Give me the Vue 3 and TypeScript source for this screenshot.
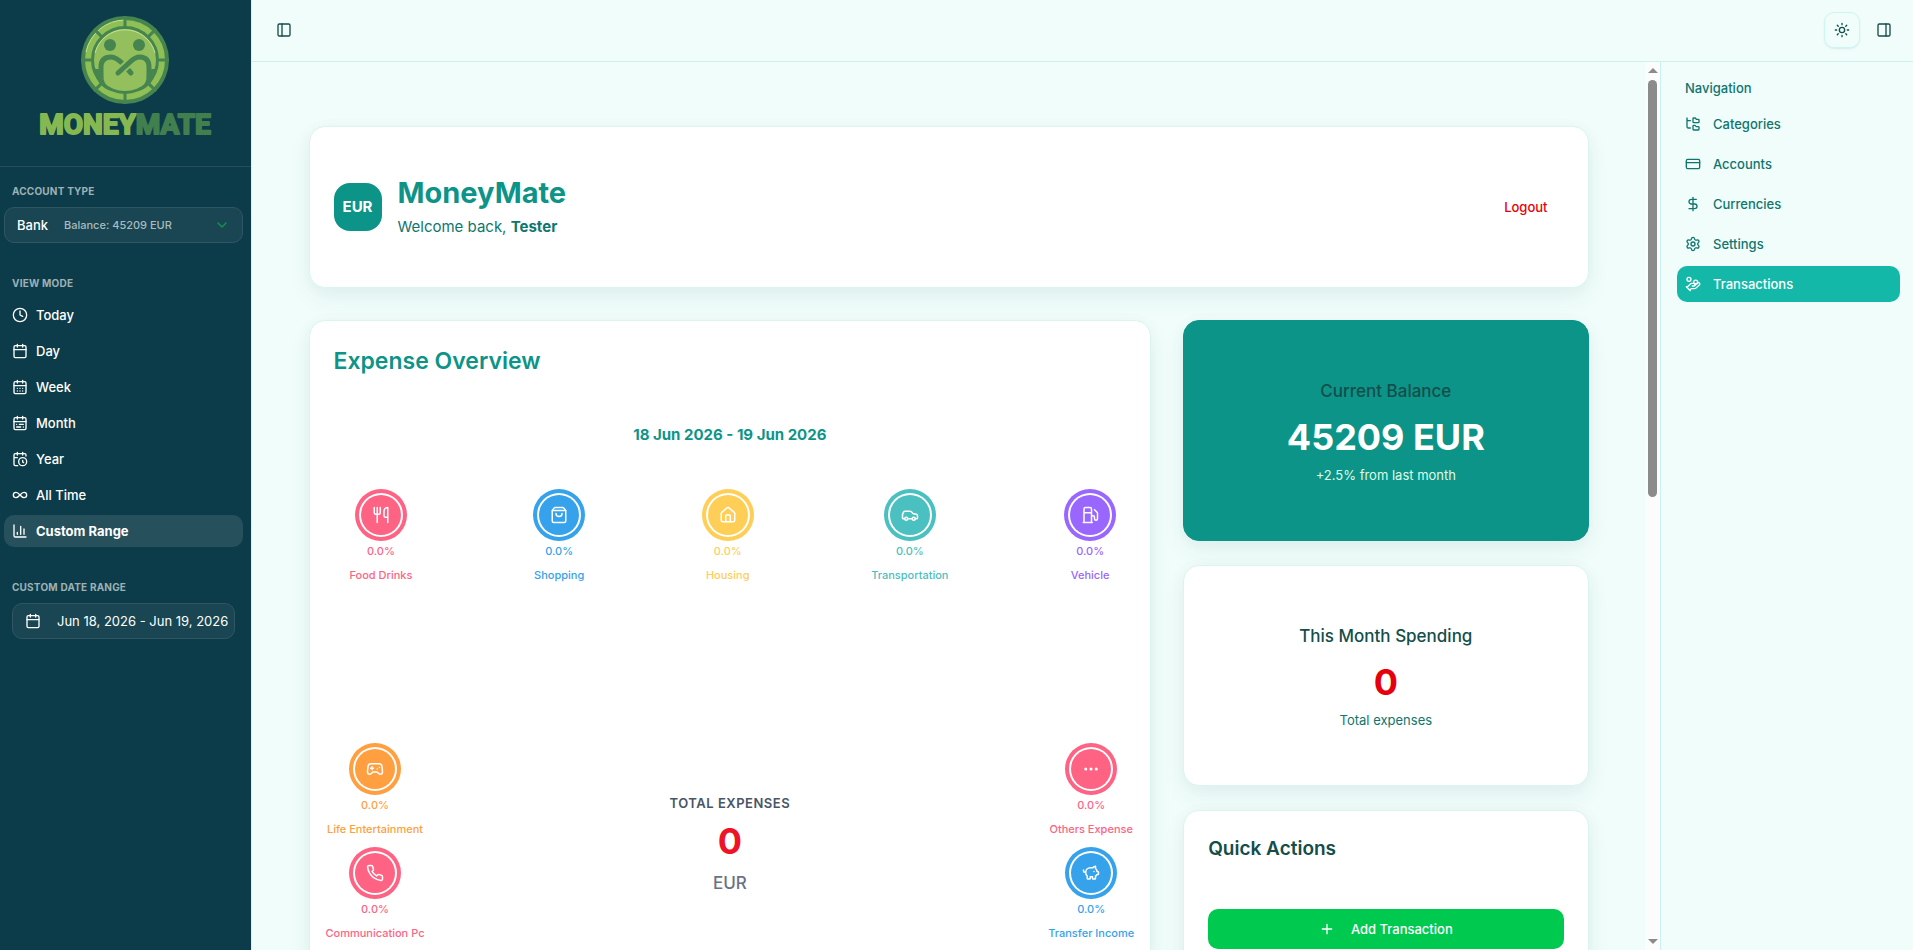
<script setup lang="ts">
import { ref } from 'vue'

const icons: Record<string, string> = {
  clock: '<circle cx="12" cy="12" r="10"/><path d="M12 6v6l4 2"/>',
  calendar: '<path d="M8 2v4M16 2v4M3 10h18"/><rect width="18" height="18" x="3" y="4" rx="2"/>',
  week: '<path d="M8 2v4M16 2v4M3 10h18M8 14h.01M12 14h.01M16 14h.01M8 18h.01M12 18h.01M16 18h.01"/><rect width="18" height="18" x="3" y="4" rx="2"/>',
  month: '<rect width="18" height="18" x="3" y="4" rx="2"/><path d="M16 2v4M3 10h18M8 2v4M17 14h-6M13 18H7M7 14h.01M17 18h.01"/>',
  year: '<path d="M21 7.5V6a2 2 0 0 0-2-2H5a2 2 0 0 0-2 2v14a2 2 0 0 0 2 2h3.5M16 2v4M8 2v4M3 10h5M17.5 17.5 16 16.3V14"/><circle cx="16" cy="16" r="6"/>',
  infinity: '<path d="M6 16c5 0 7-8 12-8a4 4 0 0 1 0 8c-5 0-7-8-12-8a4 4 0 1 0 0 8"/>',
  chart: '<path d="M3 3v16a2 2 0 0 0 2 2h16M18 17V9M13 17V5M8 17v-3"/>',
  chevron: '<path d="m6 9 6 6 6-6"/>',
  panelLeft: '<rect width="18" height="18" x="3" y="3" rx="2"/><path d="M9 3v18"/>',
  panelRight: '<rect width="18" height="18" x="3" y="3" rx="2"/><path d="M15 3v18"/>',
  sun: '<circle cx="12" cy="12" r="4"/><path d="M12 2v2M12 20v2M4.93 4.93l1.41 1.41M17.66 17.66l1.41 1.41M2 12h2M20 12h2M6.34 17.66l-1.41 1.41M19.07 4.93l-1.41 1.41"/>',
  tree: '<path d="M20 10a1 1 0 0 0 1-1V6a1 1 0 0 0-1-1h-2.5a1 1 0 0 1-.8-.4l-.9-1.2A1 1 0 0 0 15 3h-2a1 1 0 0 0-1 1v5a1 1 0 0 0 1 1ZM20 21a1 1 0 0 0 1-1v-3a1 1 0 0 0-1-1h-2.9a1 1 0 0 1-.88-.55l-.42-.85a1 1 0 0 0-.92-.6H13a1 1 0 0 0-1 1v5a1 1 0 0 0 1 1ZM3 5a2 2 0 0 0 2 2h3M3 3v13a2 2 0 0 0 2 2h3"/>',
  card: '<rect width="20" height="14" x="2" y="5" rx="2"/><path d="M2 10h20"/>',
  dollar: '<path d="M12 2v20M17 5H9.5a3.5 3.5 0 0 0 0 7h5a3.5 3.5 0 0 1 0 7H6"/>',
  gear: '<path d="M9.671 4.136a2.34 2.34 0 0 1 4.659 0 2.34 2.34 0 0 0 3.319 1.915 2.34 2.34 0 0 1 2.33 4.033 2.34 2.34 0 0 0 0 3.831 2.34 2.34 0 0 1-2.33 4.033 2.34 2.34 0 0 0-3.319 1.915 2.34 2.34 0 0 1-4.659 0 2.34 2.34 0 0 0-3.32-1.915 2.34 2.34 0 0 1-2.33-4.033 2.34 2.34 0 0 0 0-3.831A2.34 2.34 0 0 1 6.35 6.051a2.34 2.34 0 0 0 3.319-1.915"/><circle cx="12" cy="12" r="3"/>',
  coins: '<path d="M11 15h2a2 2 0 1 0 0-4h-3c-.6 0-1.1.2-1.4.6L3 17"/><path d="m7 21 1.6-1.4c.3-.4.8-.6 1.4-.6h4c1.1 0 2.1-.4 2.8-1.2l4.6-4.4a2 2 0 0 0-2.75-2.91l-4.2 3.9M2 16l6 6"/><circle cx="16" cy="9" r="2.9"/><circle cx="6" cy="5" r="3"/>',
  food: '<path d="M3 2v7c0 1.1.9 2 2 2h4a2 2 0 0 0 2-2V2M7 2v20M21 15V2a5 5 0 0 0-5 5v6c0 1.1.9 2 2 2h3Zm0 0v7"/>',
  bag: '<path d="M16 10a4 4 0 0 1-8 0M3.1 6.03h17.8"/><path d="M3.4 5.467a2 2 0 0 0-.4 1.2V20a2 2 0 0 0 2 2h14a2 2 0 0 0 2-2V6.667a2 2 0 0 0-.4-1.2l-2-2.667A2 2 0 0 0 17 2H7a2 2 0 0 0-1.6.8z"/>',
  house: '<path d="M15 21v-8a1 1 0 0 0-1-1h-4a1 1 0 0 0-1 1v8"/><path d="M3 10a2 2 0 0 1 .709-1.528l7-5.999a2 2 0 0 1 2.582 0l7 5.999A2 2 0 0 1 21 10v9a2 2 0 0 1-2 2H5a2 2 0 0 1-2-2z"/>',
  car: '<path d="M19 17h2c.6 0 1-.4 1-1v-3c0-.9-.7-1.7-1.5-1.9C18.7 10.6 16 10 16 10s-1.3-1.4-2.2-2.3c-.5-.4-1.1-.7-1.8-.7H5c-.6 0-1.1.4-1.4.9l-1.4 2.9A3.7 3.7 0 0 0 2 12v4c0 .6.4 1 1 1h2"/><circle cx="7" cy="17" r="2"/><path d="M9 17h6"/><circle cx="17" cy="17" r="2"/>',
  fuel: '<path d="M3 22h12M4 9h10M14 22V4a2 2 0 0 0-2-2H6a2 2 0 0 0-2 2v18M14 13h2a2 2 0 0 1 2 2v2a2 2 0 0 0 4 0V9.83a2 2 0 0 0-.59-1.42L18 5"/>',
  game: '<path d="M6 11h4M8 9v4M15 12h.01M18 10h.01"/><path d="M17.32 5H6.68a4 4 0 0 0-3.978 3.59C2.604 9.416 2 14.456 2 16a3 3 0 0 0 3 3c1 0 1.5-.5 2-1l1.414-1.414A2 2 0 0 1 9.828 16h4.344a2 2 0 0 1 1.414.586L17 18c.5.5 1 1 2 1a3 3 0 0 0 3-3c0-1.545-.604-6.584-.685-7.258A4 4 0 0 0 17.32 5z"/>',
  phone: '<path d="M22 16.92v3a2 2 0 0 1-2.18 2 19.79 19.79 0 0 1-8.63-3.07 19.5 19.5 0 0 1-6-6 19.79 19.79 0 0 1-3.07-8.67A2 2 0 0 1 4.11 2h3a2 2 0 0 1 2 1.72 12.84 12.84 0 0 0 .7 2.81 2 2 0 0 1-.45 2.11L8.09 9.91a16 16 0 0 0 6 6l1.27-1.27a2 2 0 0 1 2.11-.45 12.84 12.84 0 0 0 2.81.7A2 2 0 0 1 22 16.92z"/>',
  dots: '<circle cx="12" cy="12" r="1"/><circle cx="19" cy="12" r="1"/><circle cx="5" cy="12" r="1"/>',
  pig: '<path d="M11 17h3v2a1 1 0 0 0 1 1h2a1 1 0 0 0 1-1v-3a3.16 3.16 0 0 0 2-2h1a1 1 0 0 0 1-1v-2a1 1 0 0 0-1-1h-1a5 5 0 0 0-2-4V3a4 4 0 0 0-3.2 1.6l-.3.4H11a6 6 0 0 0-6 6v1a5 5 0 0 0 2 4v3a1 1 0 0 0 1 1h2a1 1 0 0 0 1-1zM16 10h.01M2 8v1a2 2 0 0 0 2 2h1"/>',
  plus: '<path d="M5 12h14M12 5v14"/>',
}

interface Entry { label: string; icon: string }
interface Category extends Entry { tone: string }

const modes: Entry[] = [
  { label: 'Today', icon: 'clock' },
  { label: 'Day', icon: 'calendar' },
  { label: 'Week', icon: 'week' },
  { label: 'Month', icon: 'month' },
  { label: 'Year', icon: 'year' },
  { label: 'All Time', icon: 'infinity' },
  { label: 'Custom Range', icon: 'chart' },
]
const mode = ref('Custom Range')

const links: Entry[] = [
  { label: 'Categories', icon: 'tree' },
  { label: 'Accounts', icon: 'card' },
  { label: 'Currencies', icon: 'dollar' },
  { label: 'Settings', icon: 'gear' },
  { label: 'Transactions', icon: 'coins' },
]
const current = ref('Transactions')

const topRow: Category[] = [
  { label: 'Food Drinks', icon: 'food', tone: 'pink' },
  { label: 'Shopping', icon: 'bag', tone: 'blue' },
  { label: 'Housing', icon: 'house', tone: 'yellow' },
  { label: 'Transportation', icon: 'car', tone: 'teal' },
  { label: 'Vehicle', icon: 'fuel', tone: 'violet' },
]
const sides: Category[][] = [
  [
    { label: 'Life Entertainment', icon: 'game', tone: 'orange' },
    { label: 'Communication Pc', icon: 'phone', tone: 'pink' },
  ],
  [
    { label: 'Others Expense', icon: 'dots', tone: 'pink' },
    { label: 'Transfer Income', icon: 'pig', tone: 'blue' },
  ],
]
const spokes = [0, 45, 90, 135, 180, 225, 270, 315]
</script>

<template>
  <div class="app">
    <aside class="sidebar">
      <div class="brand">
        <svg class="logo" viewBox="0 0 180 128" role="img" aria-label="MoneyMate">
          <circle cx="90" cy="45" r="44" fill="#468450" />
          <circle cx="90" cy="45" r="37" fill="none" stroke="#8fc055" stroke-width="6" />
          <path d="M51 37a40 40 0 0 1 39-32" fill="none" stroke="#c3e394" stroke-width="1" />
          <path v-for="a in spokes" :key="a" d="M90 1v12" stroke="#468450" stroke-width="3" :transform="`rotate(${a} 90 45)`" />
          <circle cx="90" cy="45" r="31" fill="#93c05c" />
          <path d="M60 38a31 31 0 0 1 60 0" fill="none" stroke="#c3e394" stroke-width="1" />
          <circle cx="75" cy="30" r="6" fill="#468450" />
          <circle cx="104" cy="30" r="6" fill="#468450" />
          <path d="M66 62V52C66 45 70 42 76 42c5 0 9 4 12 7l8 9" fill="none" stroke="#468450" stroke-width="5" stroke-linecap="round" />
          <path d="M83 58l13-12" fill="none" stroke="#93c05c" stroke-width="9" />
          <path d="M83 58l12-11c4-4 6-5 10-5 6 0 9 4 9 10v10" fill="none" stroke="#468450" stroke-width="5" stroke-linecap="round" />
          <path d="M63 54l5 4c0 8 3 14 9 18C67 74 59 64 60 54zM117 54l-5 4c0 8-3 14-9 18 10-2 18-12 17-22z" fill="#468450" />
          <text class="wordmark" x="90" y="119" text-anchor="middle"><tspan class="word-a">MONEY</tspan><tspan class="word-b">MATE</tspan></text>
        </svg>
      </div>

      <section class="group">
        <h2 class="group-title">Account Type</h2>
        <button class="account" type="button">
          <span>Bank</span>
          <small>Balance: 45209 EUR</small>
          <svg class="icon chevron" viewBox="0 0 24 24" v-html="icons.chevron" />
        </button>
      </section>

      <section class="group">
        <h2 class="group-title">View Mode</h2>
        <nav class="modes">
          <button v-for="m in modes" :key="m.label" type="button" class="mode" :class="{ active: m.label === mode }" @click="mode = m.label">
            <svg class="icon" viewBox="0 0 24 24" v-html="icons[m.icon]" />
            {{ m.label }}
          </button>
        </nav>
      </section>

      <section class="group">
        <h2 class="group-title">Custom Date Range</h2>
        <button class="range" type="button">
          <svg class="icon" viewBox="0 0 24 24" v-html="icons.calendar" />
          Jun 18, 2026 - Jun 19, 2026
        </button>
      </section>
    </aside>

    <div class="shell">
      <header class="topbar">
        <button class="tool" type="button" aria-label="Toggle sidebar"><svg class="icon" viewBox="0 0 24 24" v-html="icons.panelLeft" /></button>
        <div class="tools">
          <button class="tool framed" type="button" aria-label="Toggle theme"><svg class="icon" viewBox="0 0 24 24" v-html="icons.sun" /></button>
          <button class="tool" type="button" aria-label="Toggle navigation"><svg class="icon" viewBox="0 0 24 24" v-html="icons.panelRight" /></button>
        </div>
      </header>

      <div class="body">
        <main class="content">
          <div class="page">
            <section class="card hero">
              <div class="avatar">EUR</div>
              <div class="hero-text">
                <h1>MoneyMate</h1>
                <p>Welcome back, <strong>Tester</strong></p>
              </div>
              <button class="logout" type="button">Logout</button>
            </section>

            <div class="columns">
              <section class="card overview">
                <h2 class="overview-title">Expense Overview</h2>
                <p class="period">18 Jun 2026 - 19 Jun 2026</p>
                <div class="top-row">
                  <div v-for="c in topRow" :key="c.label" class="category" :class="c.tone">
                    <span class="disc"><svg class="glyph" viewBox="0 0 24 24" v-html="icons[c.icon]" /></span>
                    <span>0.0%</span>
                    <span>{{ c.label }}</span>
                  </div>
                </div>
                <div class="ring-row">
                  <div class="side">
                    <div v-for="c in sides[0]" :key="c.label" class="category" :class="c.tone">
                      <span class="disc"><svg class="glyph" viewBox="0 0 24 24" v-html="icons[c.icon]" /></span>
                      <span>0.0%</span>
                      <span>{{ c.label }}</span>
                    </div>
                  </div>
                  <div class="total">
                    <span class="total-label">Total Expenses</span>
                    <span class="total-value">0</span>
                    <span class="total-unit">EUR</span>
                  </div>
                  <div class="side side-end">
                    <div v-for="c in sides[1]" :key="c.label" class="category" :class="c.tone">
                      <span class="disc"><svg class="glyph" viewBox="0 0 24 24" v-html="icons[c.icon]" /></span>
                      <span>0.0%</span>
                      <span>{{ c.label }}</span>
                    </div>
                  </div>
                </div>
              </section>

              <div class="stack">
                <section class="card stat balance">
                  <h3>Current Balance</h3>
                  <p class="figure">45209 EUR</p>
                  <p class="note">+2.5% from last month</p>
                </section>
                <section class="card stat">
                  <h3>This Month Spending</h3>
                  <p class="figure red">0</p>
                  <p class="note">Total expenses</p>
                </section>
                <section class="card quick">
                  <h2>Quick Actions</h2>
                  <button class="add" type="button">
                    <svg class="icon" viewBox="0 0 24 24" v-html="icons.plus" />
                    Add Transaction
                  </button>
                </section>
              </div>
            </div>
          </div>
        </main>

        <div class="scrollbar" aria-hidden="true">
          <i class="arrow up"></i>
          <i class="track"><i class="thumb"></i></i>
          <i class="arrow down"></i>
        </div>

        <aside class="nav-panel">
          <h2>Navigation</h2>
          <nav>
            <a v-for="l in links" :key="l.label" href="#" :class="{ active: l.label === current }" @click.prevent="current = l.label">
              <svg class="icon" viewBox="0 0 24 24" v-html="icons[l.icon]" />
              {{ l.label }}
            </a>
          </nav>
        </aside>
      </div>
    </div>
  </div>
</template>

<style>
body {
  margin: 0;
}
</style>

<style scoped>
.app {
  display: flex;
  height: 100vh;
  overflow: hidden;
  background: #f0fdfb;
  color: #134e4a;
  font-family: Inter, "Liberation Sans", sans-serif;
  font-size: 13px;
  line-height: 20px;
}
.app * {
  box-sizing: border-box;
}
h1, h2, h3, p {
  margin: 0;
}
button {
  margin: 0;
  border: 0;
  background: none;
  color: inherit;
  font: inherit;
  cursor: pointer;
}
.icon {
  width: 16px;
  height: 16px;
  flex: none;
  fill: none;
  stroke: currentColor;
  stroke-width: 2;
  stroke-linecap: round;
  stroke-linejoin: round;
}

.sidebar {
  width: 251px;
  flex: none;
  background: #0c3c49;
  color: #fff;
}
.brand {
  display: flex;
  justify-content: center;
  height: 167px;
  padding: 15px 2px 0 0;
  border-bottom: 1px solid #254e5a;
}
.logo {
  width: 180px;
  height: 128px;
}
.wordmark {
  font-family: Roboto, sans-serif;
  font-size: 28px;
  font-weight: 700;
  stroke-width: 2;
  stroke-linejoin: round;
}
.word-a {
  fill: #86b852;
  stroke: #86b852;
}
.word-b {
  fill: #427f4e;
  stroke: #427f4e;
}
.group {
  padding: 16px 8px 16px 4px;
}
.group-title {
  padding: 0 8px 8px;
  color: #9db1b6;
  font-size: 10px;
  font-weight: 700;
  line-height: 16px;
  letter-spacing: 0.02em;
  text-transform: uppercase;
}
.account,
.range {
  display: flex;
  align-items: center;
  height: 36px;
  border: 1px solid #2f5662;
  border-radius: 10px;
  background: #194652;
  font-weight: 500;
}
.account {
  width: 100%;
  padding: 0 12px;
}
.account small {
  margin-left: 16px;
  color: #a9bbbf;
  font-size: 11px;
}
.chevron {
  margin-left: auto;
  color: #12924f;
}
.modes {
  display: flex;
  flex-direction: column;
  gap: 4px;
}
.mode {
  display: flex;
  align-items: center;
  gap: 8px;
  height: 32px;
  padding: 0 8px;
  border-radius: 10px;
  font-weight: 500;
}
.mode.active {
  background: #25505c;
  font-weight: 700;
}
.range {
  gap: 16px;
  width: calc(100% - 16px);
  margin: 0 8px;
  padding: 0 4px 0 12px;
  font-weight: 400;
  white-space: nowrap;
}

.shell {
  display: flex;
  flex: 1;
  flex-direction: column;
  min-width: 0;
  border-left: 1px solid #d0f5ee;
}
.topbar {
  display: flex;
  flex: none;
  align-items: flex-start;
  justify-content: space-between;
  height: 62px;
  padding: 12px 11px 0 14px;
  border-bottom: 1px solid #cbf3ec;
}
.tools {
  display: flex;
  gap: 6px;
}
.tool {
  display: flex;
  align-items: center;
  justify-content: center;
  width: 36px;
  height: 36px;
  padding: 0;
  border-radius: 10px;
}
.framed {
  border: 1px solid #cbf7ef;
  box-shadow: 0 1px 2px rgba(19, 78, 74, 0.1);
}
.body {
  display: flex;
  flex: 1;
  min-height: 0;
}
.content {
  flex: 1;
  min-width: 0;
  padding: 64px 32px 0;
  overflow: hidden;
}
.page {
  max-width: 1280px;
  margin: 0 auto;
}
.card {
  border: 1px solid #d9f5f0;
  border-radius: 16px;
  background: #fff;
  box-shadow: 0 10px 24px rgba(19, 78, 74, 0.06), 0 2px 16px rgba(19, 78, 74, 0.03);
}
.hero {
  display: flex;
  align-items: center;
  gap: 16px;
  min-height: 162px;
  padding: 24px;
}
.avatar {
  display: grid;
  place-items: center;
  width: 48px;
  height: 48px;
  border-radius: 16px;
  background: #0d9488;
  color: #fff;
  font-size: 15px;
  font-weight: 700;
}
.hero-text h1 {
  color: #0d9488;
  font-size: 29px;
  font-weight: 700;
  line-height: 36px;
}
.hero-text p {
  margin-top: 4px;
  color: #0f766e;
  font-size: 15px;
  line-height: 24px;
}
.logout {
  margin-left: auto;
  padding: 8px 16px;
  color: #e7000b;
  font-weight: 500;
}
.columns {
  display: grid;
  grid-template-columns: repeat(3, minmax(0, 1fr));
  gap: 32px;
  margin-top: 32px;
}
.overview {
  grid-column: span 2;
  padding: 24px 16px;
}
.overview-title {
  padding: 0 8px;
  color: #0d9488;
  font-size: 23px;
  font-weight: 600;
  line-height: 32px;
}
.period {
  margin-top: 46px;
  color: #0d9488;
  font-size: 15px;
  font-weight: 700;
  line-height: 24px;
  text-align: center;
}
.top-row {
  display: flex;
  justify-content: space-between;
  margin-top: 48px;
  padding: 0 24px;
}
.category {
  display: flex;
  flex-direction: column;
  align-items: center;
  gap: 8px;
  color: var(--tone);
  font-size: 11px;
  font-weight: 500;
  line-height: 16px;
}
.disc {
  display: grid;
  place-items: center;
  width: 40px;
  height: 40px;
  border-radius: 50%;
  background: var(--tone);
  box-shadow: 0 0 0 2px #fff, 0 0 0 6px var(--tone);
}
.glyph {
  width: 18px;
  height: 18px;
  fill: none;
  stroke: #fff;
  stroke-width: 2;
  stroke-linecap: round;
  stroke-linejoin: round;
}
.pink { --tone: #ff6384; }
.blue { --tone: #36a2eb; }
.yellow { --tone: #ffce56; }
.teal { --tone: #4bc0c0; }
.violet { --tone: #9966ff; }
.orange { --tone: #ff9f40; }
.ring-row {
  display: grid;
  grid-template-columns: 1fr auto 1fr;
  min-height: 360px;
  margin-top: 166px;
}
.side {
  display: flex;
  flex-direction: column;
  justify-self: start;
  gap: 16px;
}
.side-end {
  justify-self: end;
}
.total {
  display: flex;
  flex-direction: column;
  align-items: center;
  padding-top: 44px;
}
.total-label {
  color: #4a5565;
  font-size: 13px;
  font-weight: 600;
  letter-spacing: 0.04em;
  text-transform: uppercase;
}
.total-value {
  margin: 8px 0;
  color: #f01226;
  font-size: 36px;
  font-weight: 700;
  line-height: 40px;
}
.total-unit {
  color: #6a7282;
  font-size: 17px;
  font-weight: 500;
  line-height: 28px;
}
.stack {
  display: flex;
  flex-direction: column;
  gap: 24px;
}
.stat {
  display: flex;
  flex-direction: column;
  align-items: center;
  justify-content: center;
  min-height: 221px;
  gap: 8px;
}
.stat h3 {
  margin-bottom: 4px;
  font-size: 17px;
  font-weight: 500;
  line-height: 28px;
}
.figure {
  font-size: 36px;
  font-weight: 700;
  line-height: 40px;
}
.figure.red {
  color: #e7000b;
}
.note {
  color: #0f766e;
}
.balance {
  border-color: #0d9488;
  background: #0d9488;
}
.balance .figure {
  color: #fff;
}
.balance .note {
  color: #dcfce7;
}
.quick {
  padding: 24px;
}
.quick h2 {
  font-size: 19px;
  font-weight: 600;
  line-height: 28px;
}
.add {
  display: flex;
  align-items: center;
  justify-content: center;
  gap: 16px;
  width: 100%;
  height: 40px;
  margin: 46px 0 64px;
  border-radius: 10px;
  background: #00c950;
  color: #fff;
  font-weight: 500;
}

.scrollbar {
  display: flex;
  flex-direction: column;
  align-items: center;
  flex: none;
  width: 15px;
  padding: 6px 0;
  background: #fcfcfc;
}
.arrow {
  width: 0;
  height: 0;
  border: 5px solid transparent;
}
.up {
  border-top: 0;
  border-bottom-color: #8b8b8b;
}
.down {
  border-bottom: 0;
  border-top-color: #8b8b8b;
}
.track {
  flex: 1;
  width: 9px;
  padding: 7px 0;
}
.thumb {
  display: block;
  height: 49%;
  border-radius: 5px;
  background: #8b8b8b;
}
.nav-panel {
  width: 253px;
  flex: none;
  padding: 16px 13px 16px 16px;
  border-left: 1px solid #cbf3ec;
  color: #0f766e;
  font-weight: 500;
}
.nav-panel h2 {
  padding: 0 8px 8px;
  font-size: 13px;
  font-weight: 500;
  line-height: 20px;
}
.nav-panel nav {
  display: flex;
  flex-direction: column;
  gap: 4px;
}
.nav-panel a {
  display: flex;
  align-items: center;
  gap: 12px;
  height: 36px;
  padding: 0 8px;
  border-radius: 10px;
  color: inherit;
  text-decoration: none;
}
.nav-panel a.active {
  background: #14b8a9;
  color: #fff;
}
</style>
